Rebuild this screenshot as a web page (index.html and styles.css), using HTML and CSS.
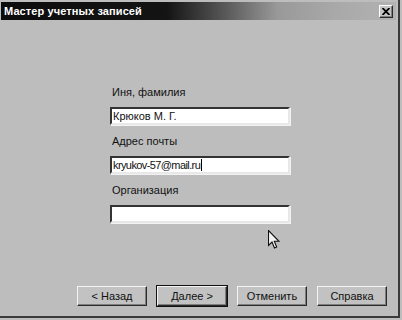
FILE: index.html
```html
<!DOCTYPE html>
<html lang="ru">
<head>
<meta charset="utf-8">
<link rel="stylesheet" href="styles.css">
</head>
<body>
<div class="window">
  <div class="titlebar">
    <span class="title">Мастер учетных записей</span>
    <span class="close">
      <svg width="8" height="7" viewBox="0 0 8 7"><path d="M0.5 0 L7.5 7 M7.5 0 L0.5 7" stroke="#000" stroke-width="1.8"/></svg>
    </span>
  </div>
  <div class="form">
    <div class="field">
      <div class="label">Иня, фамилия</div>
      <div class="input">Крюков М. Г.</div>
    </div>
    <div class="field">
      <div class="label">Адрес почты</div>
      <div class="input narrow">kryukov-57@mail.ru<span class="caret"></span></div>
    </div>
    <div class="field">
      <div class="label">Организация</div>
      <div class="input"></div>
    </div>
  </div>
  <div class="buttons">
    <div class="btn">&lt; Назад</div>
    <div class="btn default">Далее &gt;</div>
    <div class="btn">Отменить</div>
    <div class="btn">Справка</div>
  </div>
  <svg class="pointer" width="12" height="19" viewBox="0 0 12 19">
    <path d="M0.5 0.5 L0.5 15.5 L4 12 L6.5 18 L8.7 17 L6.3 11.3 L11 11.3 Z" fill="#f4f4f4" stroke="#111" stroke-width="1.1" stroke-linejoin="miter"/>
  </svg>
</div>
</body>
</html>
```
FILE: styles.css
```css
html, body {
  margin: 0;
  padding: 0;
  background: #bdbdbd;
}
.window {
  position: relative;
  width: 398px;
  height: 316px;
  background: #bdbdbd;
  border-right: 2px solid #3a3a3a;
  border-bottom: 2px solid #3a3a3a;
  display: flex;
  flex-direction: column;
  font-family: "Liberation Sans", Arial, sans-serif;
  font-size: 11px;
  color: #111;
}
.titlebar {
  margin: 2px 2px 0 1px;
  height: 18px;
  background: linear-gradient(to right, #0c0c0c 0%, #141414 42%, #555 56%, #999 70%, #a9a9a9 85%, #b2b2b2 100%);
  display: flex;
  align-items: center;
  justify-content: space-between;
  padding: 0 3px 0 3px;
}
.title {
  color: #fff;
  font-weight: bold;
  font-size: 11px;
  letter-spacing: 0.1px;
}
.close {
  box-sizing: border-box;
  width: 14px;
  height: 13px;
  background: #c4c4c4;
  border: 1px solid;
  border-color: #fff #2a2a2a #2a2a2a #fff;
  box-shadow: inset -1px -1px 0 #808080;
  display: flex;
  align-items: center;
  justify-content: center;
}
.form {
  margin-left: 110px;
  width: 180px;
  padding-top: 66px;
  display: flex;
  flex-direction: column;
  gap: 10px;
}
.label {
  height: 13px;
  line-height: 13px;
  padding-left: 2px;
  margin-bottom: 8px;
}
.input {
  height: 14px;
  line-height: 14px;
  background: #fff;
  border: 2px solid;
  border-color: #333 #e8e8e8 #e8e8e8 #333;
  box-shadow: 1px 1px 0 #f2f2f2;
  padding-left: 1px;
  white-space: nowrap;
}
.input.narrow {
  letter-spacing: -0.6px;
}
.caret {
  display: inline-block;
  width: 0;
  height: 12px;
  border-left: 1px solid #000;
  vertical-align: -2px;
  margin-left: 1px;
}
.buttons {
  margin-top: auto;
  margin-bottom: 10px;
  padding-left: 77px;
  display: flex;
  gap: 10px;
}
.btn {
  box-sizing: border-box;
  width: 70px;
  height: 20px;
  line-height: 18px;
  text-align: center;
  background: #c2c2c2;
  border: 1px solid;
  border-color: #f4f4f4 #2a2a2a #2a2a2a #f4f4f4;
  box-shadow: inset -1px -1px 0 #7e7e7e;
}
.btn.default {
  outline: 1px solid #111;
}
.pointer {
  position: absolute;
  left: 268px;
  top: 230px;
}
```
